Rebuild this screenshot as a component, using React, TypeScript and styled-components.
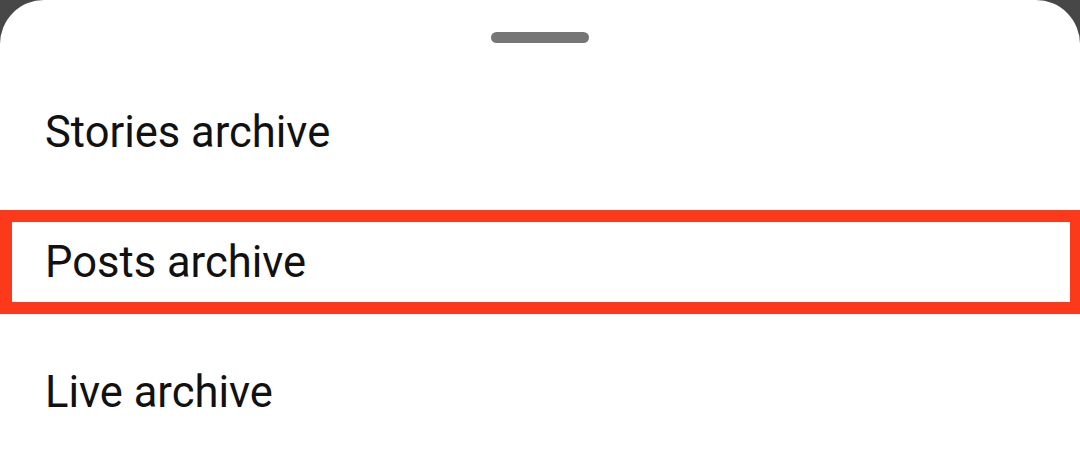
import React from 'react'
import styled, { createGlobalStyle } from 'styled-components'

const GlobalStyle = createGlobalStyle`
    html, body {
        margin: 0;
        padding: 0;
        background: #474747;
    }
    body {
        font-family: Roboto, 'Noto Sans', sans-serif;
    }
`

const items = [
    { label: 'Stories archive', highlighted: false },
    { label: 'Posts archive', highlighted: true },
    { label: 'Live archive', highlighted: false },
]

export default function App() {
    return (
        <>
            <GlobalStyle />
            <Sheet>
                <Handle />
                <Menu>
                    {items.map(item => (
                        <Item key={item.label} highlighted={item.highlighted}>
                            {item.label}
                        </Item>
                    ))}
                </Menu>
            </Sheet>
        </>
    )
}

const Sheet = styled.div`
    width: 1080px;
    height: 471px;
    background: #ffffff;
    border-radius: 44px 44px 0 0;
    display: flex;
    flex-direction: column;
    align-items: center;
    overflow: hidden;
`

const Handle = styled.div`
    width: 98px;
    height: 11px;
    margin-top: 32px;
    border-radius: 6px;
    background: #767676;
    flex-shrink: 0;
`

const Menu = styled.div`
    align-self: stretch;
    display: flex;
    flex-direction: column;
    margin-top: 24px;
`

const Item = styled.div<{ highlighted: boolean }>`
    position: relative;
    height: 130px;
    display: flex;
    align-items: center;
    padding-left: 45px;
    font-size: 43.5px;
    color: #111111;

    &::after {
        content: '';
        display: ${props => (props.highlighted ? 'block' : 'none')};
        position: absolute;
        left: 0;
        right: 0;
        top: 13px;
        height: 104px;
        box-sizing: border-box;
        border: 12px solid #fc391b;
        border-right-width: 10px;
    }
`
